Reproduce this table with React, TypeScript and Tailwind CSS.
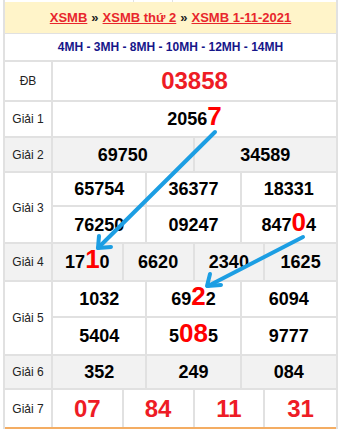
import type { ReactNode } from "react";

const line = "border-[#e1e1e1]";

// big red digit; zero line-height keeps the cell's baseline where the plain cells have it
const Hi = ({ children }: { children: ReactNode }) => (
  <span className="text-[26px] leading-[0] text-[#ff0000]">{children}</span>
);

const gridCols: Record<number, string> = {
  1: "grid-cols-1",
  2: "grid-cols-2",
  3: "grid-cols-3",
  4: "grid-cols-4",
};

const Label = ({ text }: { text: string }) => (
  <div
    className={`w-[48px] shrink-0 border-r-2 ${line} flex items-center justify-center text-[12px] text-[#222]`}
  >
    {text}
  </div>
);

interface NumRowProps {
  items: ReactNode[];
  height: string;
  border?: boolean;
  big?: boolean;
}

const NumRow = ({ items, height, border = false, big = false }: NumRowProps) => (
  <div
    className={`grid ${gridCols[items.length]} divide-x-2 divide-[#e1e1e1] ${height} ${
      border ? `border-b-2 ${line}` : ""
    }`}
  >
    {items.map((n, i) => (
      <div
        key={i}
        className={`flex items-center justify-center font-bold leading-none ${
          big ? "text-[24px] text-[#ee1c25]" : "text-[18px] text-black"
        }`}
      >
        <span>{n}</span>
      </div>
    ))}
  </div>
);

interface RowProps {
  label: string;
  gray?: boolean;
  children: ReactNode;
  bottom?: boolean;
}

const Row = ({ label, gray = false, children, bottom = true }: RowProps) => (
  <div
    className={`flex ${gray ? "bg-[#f2f2f2]" : "bg-white"} ${
      bottom ? `border-b-2 ${line}` : ""
    }`}
  >
    <Label text={label} />
    <div className="flex-1 flex flex-col">{children}</div>
  </div>
);

export default function App() {
  return (
    <div className="relative w-[340px] h-[430px] bg-white overflow-hidden font-['Liberation_Sans',Arial,sans-serif]">
      <div className={`ml-[3px] w-[335px] border-x-2 ${line}`}>
        <div className="flex h-[2px]">
          <div className="w-[128px]" />
          <div className={`w-[40px] border-x ${line}`} />
        </div>

        <div className="h-[31px] bg-[#fff4c9] flex items-center justify-center text-[13px] font-bold">
          <a className="text-[#e8262c] underline decoration-[#e8262c]">XSMB</a>
          <span className="mx-[4px] text-[#222]">»</span>
          <a className="text-[#e8262c] underline decoration-[#e8262c]">XSMB thứ 2</a>
          <span className="mx-[4px] text-[#222]">»</span>
          <a className="text-[#e8262c] underline decoration-[#e8262c]">XSMB 1-11-2021</a>
        </div>

        <div
          className={`h-[29px] border-y ${line} border-b-2 flex items-center justify-center text-[12px] font-bold text-[#16168a]`}
        >
          4MH - 3MH - 8MH - 10MH - 12MH - 14MH
        </div>

        <Row label="ĐB">
          <div className="h-[38px] flex items-center justify-center text-[24px] font-bold text-[#ee1c25]">
            03858
          </div>
        </Row>

        <Row label="Giải 1">
          <div className="h-[34px] flex items-center justify-center font-bold text-[18px] leading-none">
            <span>
              2056<Hi>7</Hi>
            </span>
          </div>
        </Row>

        <Row label="Giải 2" gray>
          <NumRow items={["69750", "34589"]} height="h-[33px]" />
        </Row>

        <Row label="Giải 3">
          <NumRow items={["65754", "36377", "18331"]} height="h-[34px]" border />
          <NumRow
            items={[
              "76250",
              "09247",
              <>
                847<Hi>0</Hi>4
              </>,
            ]}
            height="h-[35px]"
          />
        </Row>

        <Row label="Giải 4" gray>
          <NumRow
            items={[
              <>
                17<Hi>1</Hi>0
              </>,
              "6620",
              "2340",
              "1625",
            ]}
            height="h-[36px]"
          />
        </Row>

        <Row label="Giải 5">
          <NumRow
            items={[
              "1032",
              <>
                69<Hi>2</Hi>2
              </>,
              "6094",
            ]}
            height="h-[36px]"
            border
          />
          <NumRow
            items={[
              "5404",
              <>
                5<Hi>08</Hi>5
              </>,
              "9777",
            ]}
            height="h-[36px]"
          />
        </Row>

        <Row label="Giải 6" gray>
          <NumRow items={["352", "249", "084"]} height="h-[32px]" />
        </Row>

        <Row label="Giải 7" bottom={false}>
          <NumRow items={["07", "84", "11", "31"]} height="h-[37px]" big />
        </Row>

        <div className="h-[2px] bg-[#f4ad63]" />
      </div>

      <svg
        className="absolute inset-0 pointer-events-none"
        width="340"
        height="430"
        viewBox="0 0 340 430"
      >
        <g
          stroke="#1c9ee3"
          strokeWidth="4"
          strokeLinecap="round"
          strokeLinejoin="round"
          fill="none"
        >
          <line x1="215" y1="132" x2="98" y2="248" />
          <polyline points="99,236 98,248 111,247" />
          <line x1="303" y1="237" x2="208" y2="286" />
          <polyline points="210,274 207,286 221,285" />
        </g>
      </svg>
    </div>
  );
}
